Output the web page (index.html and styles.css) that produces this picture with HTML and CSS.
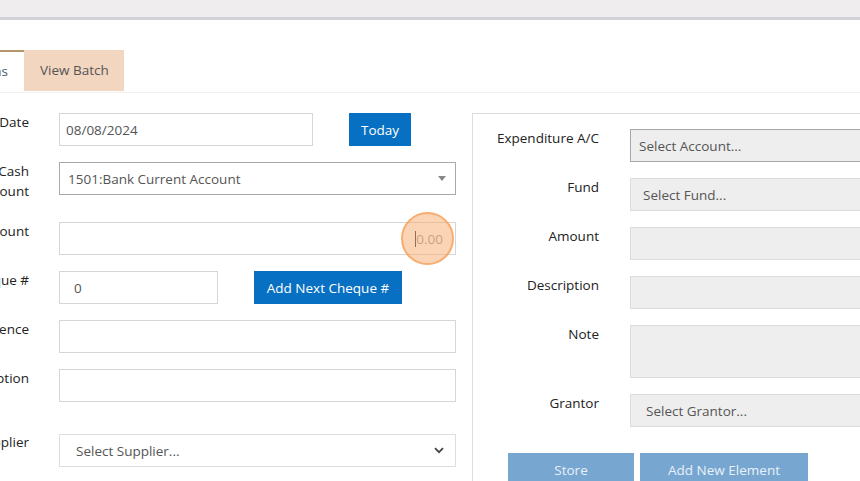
FILE: index.html
```html
<!DOCTYPE html>
<html lang="en">
<head>
    <meta charset="UTF-8">
    <title>Transactions</title>
    <link rel="stylesheet" href="styles.css">
</head>
<body>
    <div class="top-bar"></div>

    <div class="page">
        <div class="tabs">
            <div class="tab active">Transactions</div>
            <div class="tab batch">View Batch</div>
        </div>

        <div class="form-area">
            <div class="left-col">
                <div class="form-row">
                    <label class="form-label">Date</label>
                    <input type="text" class="form-input date-input" value="08/08/2024">
                    <button class="blue-btn today-btn">Today</button>
                </div>
                <div class="form-row">
                    <label class="form-label">Bank/Cash Account</label>
                    <div class="fake-select wide">
                        <span class="select-text">1501:Bank Current Account</span>
                        <span class="tri"></span>
                    </div>
                </div>
                <div class="form-row">
                    <label class="form-label">Amount</label>
                    <div class="form-input wide amount-box">
                        <span class="caret"></span><span class="placeholder">0.00</span>
                        <span class="click-mark"></span>
                    </div>
                </div>
                <div class="form-row">
                    <label class="form-label">Cheque #</label>
                    <input type="text" class="form-input cheque-input" value="0">
                    <button class="blue-btn cheque-btn">Add Next Cheque #</button>
                </div>
                <div class="form-row">
                    <label class="form-label">Reference</label>
                    <input type="text" class="form-input wide">
                </div>
                <div class="form-row tall-gap">
                    <label class="form-label">Description</label>
                    <input type="text" class="form-input wide">
                </div>
                <div class="form-row">
                    <label class="form-label supplier-label">Supplier</label>
                    <div class="fake-select wide supplier">
                        <span class="select-text">Select Supplier...</span>
                        <svg class="chevron" width="10" height="7" viewBox="0 0 10 7">
                            <path d="M1 1.2 L5 5.2 L9 1.2" fill="none" stroke="#444" stroke-width="1.8"/>
                        </svg>
                    </div>
                </div>
            </div>

            <div class="right-panel">
                <div class="panel-row">
                    <label class="panel-label">Expenditure A/C</label>
                    <div class="grey-input dark-border"><span class="grey-text">Select Account...</span></div>
                </div>
                <div class="panel-row">
                    <label class="panel-label">Fund</label>
                    <div class="grey-input"><span class="grey-text fund">Select Fund...</span></div>
                </div>
                <div class="panel-row">
                    <label class="panel-label">Amount</label>
                    <div class="grey-input"></div>
                </div>
                <div class="panel-row">
                    <label class="panel-label">Description</label>
                    <div class="grey-input"></div>
                </div>
                <div class="panel-row">
                    <label class="panel-label">Note</label>
                    <div class="grey-input note"></div>
                </div>
                <div class="panel-row">
                    <label class="panel-label">Grantor</label>
                    <div class="grey-input"><span class="grey-text grantor">Select Grantor...</span></div>
                </div>
                <div class="panel-buttons">
                    <button class="light-btn store-btn">Store</button>
                    <button class="light-btn element-btn">Add New Element</button>
                </div>
            </div>
        </div>
    </div>
</body>
</html>
```

FILE: styles.css
```css
* {
    margin: 0;
    padding: 0;
    box-sizing: border-box;
    font-family: "Open Sans", "Noto Sans", sans-serif;
}

body {
    background: #fff;
    width: 860px;
    height: 481px;
    overflow: hidden;
    color: #222;
    font-size: 13.5px;
}

.top-bar {
    height: 20px;
    background: #efedee;
    border-bottom: 3px solid #d3d2d8;
}

.page {
    margin-left: -73px;
    width: 1200px;
}

.tabs {
    display: flex;
    margin-top: 30px;
    border-bottom: 1px solid #f0f0f0;
    height: 43px;
    justify-content: flex-start;
}

.tab {
    height: 41px;
    padding: 0 16px;
    line-height: 41px;
    color: #555;
    font-size: 13.5px;
}

/* first tab is pushed off the left edge, only its tail shows */
.tab.active {
    border-top: 2px solid #b5956c;
    line-height: 38px;
    background: #fff;
    width: 97px;
    padding: 0 16px 0 0;
    text-align: right;
}

.tab.batch {
    background: #f2d6c0;
    padding: 0 15px 0 16px;
}

.form-area {
    display: flex;
    margin-top: 20px;
    align-items: flex-start;
}

.left-col {
    width: 545px;
    flex-shrink: 0;
}

.form-row {
    display: flex;
    align-items: flex-start;
    margin-bottom: 16px;
}

.form-row.tall-gap {
    margin-bottom: 32px;
}

.form-label {
    width: 102px;
    margin-right: 30px;
    text-align: right;
    line-height: 19.5px;
    padding-bottom: 5px;
    font-size: 13.5px;
    color: #222;
}

.supplier-label {
    margin-top: -1px;
}

.form-input {
    height: 33px;
    border: 1px solid #d6d6d6;
    padding: 0 6px;
    font-size: 13.5px;
    color: #555;
    background: #fff;
    outline: none;
}

.wide {
    width: 397px;
}

.date-input {
    width: 254px;
}

.cheque-input {
    width: 159px;
    padding-left: 14px;
}

.blue-btn {
    height: 33px;
    border: none;
    background: #0870c3;
    color: #fff;
    font-size: 13.5px;
}

.today-btn {
    width: 62px;
    margin-left: 36px;
}

.cheque-btn {
    width: 148px;
    margin-left: 36px;
}

.fake-select {
    height: 33px;
    border: 1px solid #a9a9a9;
    display: flex;
    align-items: center;
    padding: 0 8px;
    color: #555;
    position: relative;
}

.fake-select.supplier {
    border-color: #dedede;
    padding-left: 16px;
}

.select-text {
    flex: 1;
    font-size: 13.5px;
}

.tri {
    width: 0;
    height: 0;
    border-left: 4px solid transparent;
    border-right: 4px solid transparent;
    border-top: 5px solid #888;
    margin-right: 1px;
    margin-top: -1px;
}

.chevron {
    margin-right: 3px;
}

.amount-box {
    display: flex;
    align-items: center;
    justify-content: flex-end;
    padding-right: 12px;
    position: relative;
}

.caret {
    width: 1px;
    height: 16px;
    background: #333;
}

.placeholder {
    color: #999;
    font-size: 13.5px;
}

.click-mark {
    position: absolute;
    right: 1px;
    top: -11px;
    width: 53px;
    height: 53px;
    border-radius: 50%;
    border: 2px solid rgba(245, 160, 90, 0.75);
    background: rgba(248, 170, 110, 0.5);
}

.right-panel {
    width: 600px;
    height: 400px;
    flex-shrink: 0;
    border: 1px solid #dddddd;
    border-right: none;
    padding-top: 15px;
}

.panel-row {
    display: flex;
    align-items: flex-start;
    margin-bottom: 16px;
}

.panel-label {
    width: 126px;
    margin-right: 31px;
    text-align: right;
    line-height: 19.5px;
    font-size: 13.5px;
    color: #222;
}

.grey-input {
    width: 300px;
    height: 33px;
    background: #eeeeee;
    border: 1px solid #dcdcdc;
    display: flex;
    align-items: center;
    padding-left: 8px;
}

.grey-input.dark-border {
    border-color: #a8a8a8;
}

.grey-input.note {
    height: 53px;
}

.grey-text {
    color: #555;
    font-size: 13.5px;
}

.grey-text.fund {
    padding-left: 4px;
}

.grey-text.grantor {
    padding-left: 7px;
}

.panel-buttons {
    display: flex;
    gap: 6px;
    margin-left: 35px;
    margin-top: 26px;
}

.light-btn {
    height: 33px;
    border: none;
    background: #77a6d0;
    color: #e9f1f8;
    font-size: 13.5px;
}

.store-btn {
    width: 126px;
}

.element-btn {
    width: 168px;
}
```
